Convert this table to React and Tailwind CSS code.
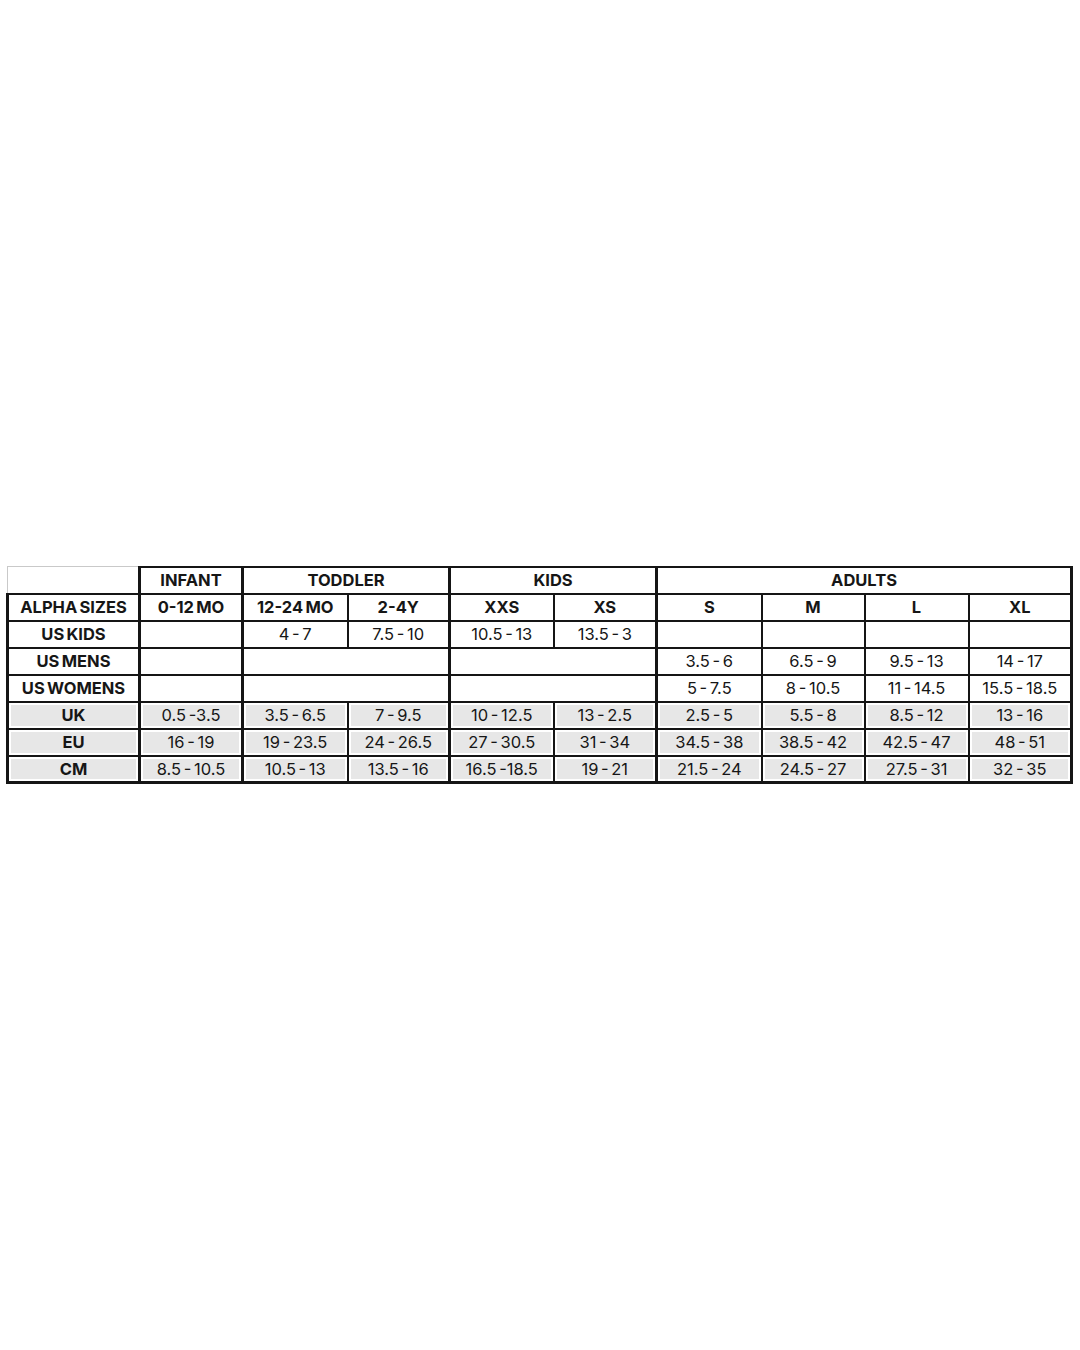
const COL_WIDTHS = [132, 103, 105, 102, 104, 103, 105, 103, 104, 103];

// columns that start a new size group get the heavier left rule
const GROUP_START = [1, 2, 4, 6];

const ROWS = [
  {
    label: "ALPHA SIZES",
    bold: true,
    cells: ["0-12 MO", "12-24 MO", "2-4Y", "XXS", "XS", "S", "M", "L", "XL"],
  },
  {
    label: "US KIDS",
    cells: ["", "4 - 7", "7.5 - 10", "10.5 - 13", "13.5 - 3", "", "", "", ""],
  },
  {
    label: "US MENS",
    cells: ["", ["", 2], ["", 2], "3.5 - 6", "6.5 - 9", "9.5 - 13", "14 - 17"],
  },
  {
    label: "US WOMENS",
    cells: ["", ["", 2], ["", 2], "5 - 7.5", "8 - 10.5", "11 - 14.5", "15.5 - 18.5"],
  },
  {
    label: "UK",
    shaded: true,
    cells: ["0.5 -3.5", "3.5 - 6.5", "7 - 9.5", "10 - 12.5", "13 - 2.5", "2.5 - 5", "5.5 - 8", "8.5 - 12", "13 - 16"],
  },
  {
    label: "EU",
    shaded: true,
    cells: ["16 - 19", "19 - 23.5", "24 - 26.5", "27 - 30.5", "31 - 34", "34.5 - 38", "38.5 - 42", "42.5 - 47", "48 - 51"],
  },
  {
    label: "CM",
    shaded: true,
    cells: ["8.5 - 10.5", "10.5 - 13", "13.5 - 16", "16.5 -18.5", "19 - 21", "21.5 - 24", "24.5 - 27", "27.5 - 31", "32 - 35"],
  },
];

const GROUPS = [
  ["INFANT", 1],
  ["TODDLER", 2],
  ["KIDS", 2],
  ["ADULTS", 4],
];

function Cell({ children, span = 1, thick, shaded, bold, last }) {
  const rule = thick
    ? "border-l-[3px] border-l-[#151515]"
    : "border-l-2 border-l-[#151515]";
  const fill = shaded
    ? "bg-[#e7e7e7] shadow-[inset_0_0_0_2px_#ffffff]"
    : "bg-white";
  const weight = bold
    ? "font-bold [word-spacing:-0.1em]"
    : "font-normal [word-spacing:-0.12em]";
  const edge = last ? "border-r-[3px] border-r-[#151515]" : "";
  return (
    <td
      colSpan={span}
      className={`h-[27px] border-y-2 border-y-[#151515] p-0 text-center align-middle text-[16.5px] leading-none text-[#161616] ${rule} ${fill} ${weight} ${edge}`}
    >
      {children}
    </td>
  );
}

function SizeRow({ row }) {
  let col = 1;
  const total = row.cells.length;
  return (
    <tr>
      <Cell thick shaded={row.shaded} bold>
        {row.label}
      </Cell>
      {row.cells.map((c, i) => {
        const [text, span] = Array.isArray(c) ? c : [c, 1];
        const start = col;
        col += span;
        return (
          <Cell
            key={i}
            span={span}
            thick={GROUP_START.includes(start)}
            shaded={row.shaded}
            bold={row.bold}
            last={i === total - 1}
          >
            {text}
          </Cell>
        );
      })}
    </tr>
  );
}

export default function App() {
  return (
    <div
      className="flex min-h-[1350px] items-center bg-white pl-[6px] pr-[10px]"
      style={{ fontFamily: "Inter, 'Open Sans', sans-serif" }}
    >
      <table className="w-[1062px] table-fixed border-collapse border-b-[3px] border-b-[#151515]">
        <colgroup>
          {COL_WIDTHS.map((w, i) => (
            <col key={i} style={{ width: w }} />
          ))}
        </colgroup>
        <tbody>
          <tr>
            <td className="h-[27px] border-t border-l border-t-[#c9c9c9] border-l-[#c9c9c9] border-b-2 border-b-[#151515] p-0" />
            {GROUPS.map(([name, span], i) => (
              <td
                key={name}
                colSpan={span}
                className={`h-[27px] border-y-2 border-y-[#151515] border-l-[3px] border-l-[#151515] p-0 text-center align-middle text-[16.5px] font-bold leading-none text-[#161616] ${
                  i === GROUPS.length - 1 ? "border-r-[3px] border-r-[#151515]" : ""
                }`}
              >
                {name}
              </td>
            ))}
          </tr>
          {ROWS.map((row) => (
            <SizeRow key={row.label} row={row} />
          ))}
        </tbody>
      </table>
    </div>
  );
}
